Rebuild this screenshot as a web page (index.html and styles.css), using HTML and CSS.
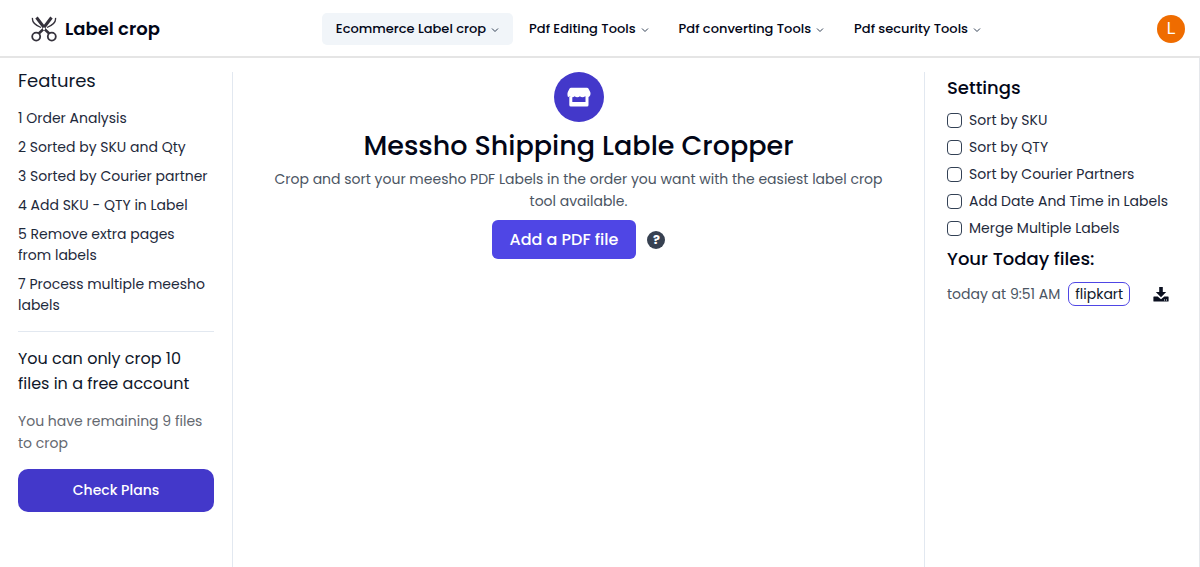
FILE: index.html
```html
<!DOCTYPE html>
<html lang="en">
<head>
<meta charset="utf-8">
<meta name="viewport" content="width=device-width, initial-scale=1">
<title>Label crop</title>
<link rel="stylesheet" href="styles.css">
</head>
<body>
<header class="topbar">
  <a class="brand" href="#">
    <svg class="brand-icon" viewBox="0 0 26 26" fill="none" stroke="#35323c" aria-hidden="true">
      <circle cx="5.2" cy="20.6" r="4" stroke-width="1.8"/>
      <circle cx="20.8" cy="20.6" r="4" stroke-width="1.8"/>
      <path d="M7.800 17.500 13 12.500 18.200 17.500" stroke-width="2.600"/>
      <path d="M5.500 1.500 13.500 12M20.500 1.500 12.500 12" stroke-width="3"/>
      <path d="M1.500 1.800C.8 6 4.500 9.300 10 11.500M24.500 1.800C25.200 6 21.500 9.300 16 11.500" stroke-width="1.300"/>
      <circle cx="13" cy="12.800" r="1.200" fill="#fff" stroke="none"/>
    </svg>
    <span>Label crop</span>
  </a>
  <nav class="nav" aria-label="Tools">
    <button class="nav-item active" type="button">Ecommerce Label crop <svg class="chevron" viewBox="0 0 8 8"><path d="M1 2.500 4 5.500 7 2.500"/></svg></button>
    <button class="nav-item" type="button">Pdf Editing Tools <svg class="chevron" viewBox="0 0 8 8"><path d="M1 2.500 4 5.500 7 2.500"/></svg></button>
    <button class="nav-item" type="button">Pdf converting Tools <svg class="chevron" viewBox="0 0 8 8"><path d="M1 2.500 4 5.500 7 2.500"/></svg></button>
    <button class="nav-item" type="button">Pdf security Tools <svg class="chevron" viewBox="0 0 8 8"><path d="M1 2.500 4 5.500 7 2.500"/></svg></button>
  </nav>
  <button class="avatar" type="button" aria-label="Account">L</button>
</header>
<div class="columns">
  <aside class="features">
    <h2 class="features-title">Features</h2>
    <ul class="feature-list">
      <li>1 Order Analysis</li>
      <li>2 Sorted by SKU and Qty</li>
      <li>3 Sorted by Courier partner</li>
      <li>4 Add SKU - QTY in Label</li>
      <li>5 Remove extra pages<br>from labels</li>
      <li>7 Process multiple meesho<br>labels</li>
    </ul>
    <hr class="divider">
    <p class="plan-limit">You can only crop 10<br>files in a free account</p>
    <p class="plan-left">You have remaining 9 files<br>to crop</p>
    <button class="plans" type="button">Check Plans</button>
  </aside>
  <main class="cropper">
    <svg class="shop" viewBox="0 0 50 50" aria-hidden="true">
      <circle cx="25" cy="25" r="25" fill="#4338ca"/>
      <path fill="#fff" d="M17 15.700h16q.9 0 1.400.8l1.800 3.500c.9 2.300-.1 5-2.700 5.200q-1.500 0-2.400-1-1 1-2.600 1t-2.600-1q-1 1-2.600 1t-2.600-1q-1 1-2.600 1t-2.300-1q-.9.900-1.800.8C13.700 24.200 13 22 13.800 20l1.800-3.500q.5-.8 1.400-.8z"/>
      <path fill="#fff" d="M15.300 24.500h3V30h13.200v-5.500h3V33q0 1.500-1.500 1.500H16.800q-1.500 0-1.500-1.500z"/>
    </svg>
    <h1 class="title">Messho Shipping Lable Cropper</h1>
    <p class="intro">Crop and sort your meesho PDF Labels in the order you want with the easiest label crop<br>tool available.</p>
    <div class="actions">
      <button class="add-file" type="button">Add a PDF file</button>
      <button class="help" type="button" aria-label="Help">?</button>
    </div>
  </main>
  <aside class="settings">
    <h2 class="settings-title">Settings</h2>
    <div class="options">
      <label class="option"><input class="check" type="checkbox">Sort by SKU</label>
      <label class="option"><input class="check" type="checkbox">Sort by QTY</label>
      <label class="option"><input class="check" type="checkbox">Sort by Courier Partners</label>
      <label class="option"><input class="check" type="checkbox">Add Date And Time in Labels</label>
      <label class="option"><input class="check" type="checkbox">Merge Multiple Labels</label>
    </div>
    <h2 class="settings-title">Your Today files:</h2>
    <div class="file">
      <span class="time">today at 9:51 AM</span>
      <span class="tag">flipkart</span>
      <button class="download" type="button" aria-label="Download">
        <svg viewBox="0 0 16 16" fill="#0b1020"><path d="M6.200 1h3.600v5h3.400L8 11.200 2.800 6h3.400z"/><path fill-rule="evenodd" d="M1 10.500h3.700L8 13.300l3.300-2.800H15q.6 0 .6.600v3.800q0 .6-.6.600H1q-.6 0-.6-.6v-3.800q0-.6.600-.6zM11 13.500v1h1v-1zm2 0v1h1v-1z"/></svg>
      </button>
    </div>
  </aside>
</div>
</body>
</html>
```
FILE: styles.css
```css
* { box-sizing: border-box; }

body {
  margin: 0;
  min-height: 100vh;
  display: flex;
  flex-direction: column;
  background: #fff;
  color: #1e293b;
  font-family: Poppins, Inter, sans-serif;
  font-size: 14px;
}

h1, h2, p, ul { margin: 0; padding: 0; font-weight: 400; }
button { font: inherit; border: 0; padding: 0; background: none; color: inherit; cursor: pointer; }

.topbar {
  display: flex;
  justify-content: space-between;
  align-items: center;
  height: 58px;
  padding: 1px 15px 0 31px;
  border-bottom: 2px solid #e5e5e5;
}
.brand {
  display: flex;
  align-items: center;
  gap: 8px;
  color: #020617;
  font-size: 18px;
  font-weight: 600;
  text-decoration: none;
}
.brand-icon { width: 26px; height: 26px; }
.nav { display: flex; gap: 2px; }
.nav-item {
  display: flex;
  align-items: center;
  gap: 5px;
  height: 32px;
  padding: 0 14px;
  border-radius: 5px;
  color: #020617;
  font-size: 13px;
  font-weight: 500;
  white-space: nowrap;
}
.nav-item.active { background: #f1f5f9; }
.chevron { width: 8px; height: 8px; margin-top: 2px; fill: none; stroke: #334155; stroke-width: 1; }
.avatar {
  width: 28px;
  height: 28px;
  border-radius: 50%;
  background: #ef6c00;
  color: #fff;
  font-family: Roboto, sans-serif;
  font-size: 16px;
}

.columns {
  flex: 1;
  display: grid;
  grid-template-columns: 233px 1fr 275px;
  padding-top: 14px;
  border-right: 1px solid #e5e7eb;
}

.features { padding: 0 18px; border-right: 1px solid #e2e8f0; }
.features-title { color: #0f172a; font-size: 18px; line-height: 18px; }
.feature-list { padding-top: 18px; list-style: none; line-height: 21px; white-space: nowrap; }
.feature-list li { padding-bottom: 8px; }
.divider { margin: 7px 0 14px; border: 0; border-top: 1px solid #e2e8f0; }
.plan-limit { color: #0f172a; font-size: 16px; line-height: 25px; white-space: nowrap; }
.plan-left { padding: 14px 0 15px; color: #64686f; line-height: 22px; white-space: nowrap; }
.plans {
  width: 100%;
  height: 43px;
  border-radius: 10px;
  background: #4338ca;
  color: #fff;
  font-weight: 500;
}

.cropper { display: flex; flex-direction: column; align-items: center; text-align: center; }
.shop { width: 50px; height: 50px; }
.title { padding-top: 6px; color: #020617; font-size: 27px; font-weight: 500; line-height: 36px; }
.intro { padding: 4px 0 8px; color: #4b5563; line-height: 22px; }
.actions { display: flex; align-items: center; gap: 11px; }
.add-file {
  height: 39px;
  padding: 0 18px;
  border-radius: 6px;
  background: #4f46e5;
  color: #fff;
  font-size: 16px;
  font-weight: 500;
}
.help {
  width: 18px;
  height: 18px;
  border-radius: 50%;
  background: #374151;
  color: #fff;
  font-size: 13px;
  font-weight: 700;
  line-height: 18px;
}

.settings { padding: 2px 22px 0; border-left: 1px solid #e2e8f0; }
.settings-title { color: #020617; font-size: 18px; font-weight: 500; line-height: 28px; }
.options { padding: 5px 0 3px; }
.option { display: flex; align-items: center; gap: 7px; height: 27px; white-space: nowrap; }
.check {
  appearance: none;
  width: 15px;
  height: 15px;
  margin: 0;
  border: 1px solid #334155;
  border-radius: 4px;
  background: #fff;
}
.check:checked { background: #4338ca; }
.file { display: flex; align-items: center; gap: 8px; padding-top: 9px; white-space: nowrap; }
.time { color: #4b5563; }
.tag { padding: 0 6px; border: 1px solid #4f46e5; border-radius: 7px; color: #0f172a; line-height: 22px; }
.download { display: flex; width: 16px; height: 16px; margin: 0 8px 0 auto; }
```
